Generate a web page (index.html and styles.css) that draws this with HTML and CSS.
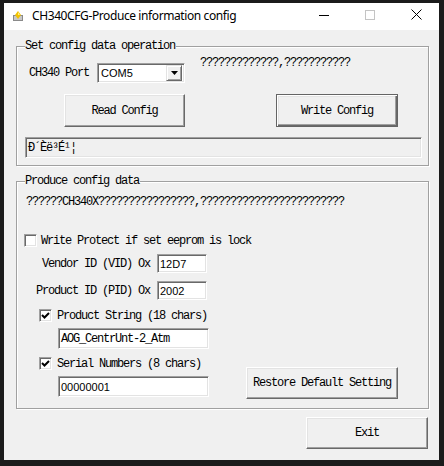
FILE: index.html
```html
<!DOCTYPE html>
<html>
<head>
<meta charset="utf-8">
<link rel="stylesheet" href="styles.css">
</head>
<body>
<div class="window">
  <div class="titlebar">
    <svg class="app-icon" width="12" height="12" viewBox="0 0 12 12">
      <rect x="1" y="5" width="10" height="6" fill="#8a8a8a"/>
      <rect x="2" y="6" width="8" height="4" fill="#c8c8c8"/>
      <polygon points="6,1 9,5 6,9 3,5" fill="#f2c200"/>
      <polygon points="6,2 8,5 6,5" fill="#fff27a"/>
    </svg>
    <span class="title">CH340CFG-Produce information config</span>
    <div class="caption">
      <span class="cap"><svg width="10" height="10" viewBox="0 0 10 10"><line x1="0" y1="5.5" x2="10" y2="5.5" stroke="#000" stroke-width="1"/></svg></span>
      <span class="cap"><svg width="10" height="10" viewBox="0 0 10 10"><rect x="0.5" y="0.5" width="9" height="9" fill="none" stroke="#c4c4c4" stroke-width="1"/></svg></span>
      <span class="cap"><svg width="11" height="11" viewBox="0 0 11 11"><path d="M0.5 0.5 L10.5 10.5 M10.5 0.5 L0.5 10.5" stroke="#000" stroke-width="1"/></svg></span>
    </div>
  </div>
  <div class="client">
    <section class="group g1">
      <div class="legend">Set config data operation</div>
      <div class="port-row">
        <span class="label port-label">CH340 Port</span>
        <div class="combo">
          <span class="combo-value">COM5</span>
          <span class="combo-btn"><svg width="7" height="4" viewBox="0 0 7 4"><polygon points="0,0 7,0 3.5,4" fill="#000"/></svg></span>
        </div>
        <span class="label hint">?????????????,???????????</span>
      </div>
      <div class="btn-row">
        <button class="btn read-btn">Read Config</button>
        <button class="btn btn-default write-btn">Write Config</button>
      </div>
      <div class="field status">Ð´Èë³É¹¦</div>
    </section>

    <section class="group g2">
      <div class="legend">Produce config data</div>
      <div class="label note">??????CH340X????????????????,????????????????????????</div>
      <label class="check-row protect">
        <span class="checkbox"></span>
        <span class="label">Write Protect if set eeprom is lock</span>
      </label>
      <div class="id-row vid">
        <span class="label id-label">Vendor ID (VID) Ox</span>
        <span class="field sans small-field">12D7</span>
      </div>
      <div class="id-row pid">
        <span class="label id-label">Product ID (PID) Ox</span>
        <span class="field sans small-field">2002</span>
      </div>
      <div class="lower">
        <div class="lower-left">
          <label class="check-row">
            <span class="checkbox checked"><svg width="9" height="9" viewBox="0 0 9 9"><path d="M1 4 L3.5 6.5 L8 2" fill="none" stroke="#000" stroke-width="2"/></svg></span>
            <span class="label">Product String (18 chars)</span>
          </label>
          <span class="field wide-field mono">AOG_CentrUnt-2_Atm</span>
          <label class="check-row serial-row">
            <span class="checkbox checked"><svg width="9" height="9" viewBox="0 0 9 9"><path d="M1 4 L3.5 6.5 L8 2" fill="none" stroke="#000" stroke-width="2"/></svg></span>
            <span class="label">Serial Numbers (8 chars)</span>
          </label>
          <span class="field wide-field sans">00000001</span>
        </div>
        <button class="btn restore-btn">Restore Default Setting</button>
      </div>
    </section>

    <button class="btn exit-btn">Exit</button>
  </div>
</div>
</body>
</html>
```

FILE: styles.css
```css
* { box-sizing: border-box; }
html, body { margin: 0; padding: 0; }
body {
  background: #1b1b1b;
  width: 444px;
  height: 466px;
  overflow: hidden;
  padding: 3px 0 0 4px;
}
.window {
  width: 435px;
  height: 457px;
  background: #f0f0f0;
  display: flex;
  flex-direction: column;
}
.titlebar {
  height: 27px;
  background: #ffffff;
  display: flex;
  align-items: center;
  flex: none;
}
.app-icon { margin-left: 8px; margin-top: -2px; flex: none; }
.title {
  margin-left: 8px;
  font-family: "Noto Sans", sans-serif;
  font-size: 12px;
  letter-spacing: -0.4px;
  color: #000;
  margin-top: -3px;
  white-space: nowrap;
}
.caption { margin-left: auto; display: flex; height: 27px; }
.cap {
  width: 46px;
  height: 27px;
  display: flex;
  align-items: center;
  justify-content: center;
  padding-bottom: 4px;
}
.cap svg { display: block; }

.client {
  flex: 1;
  display: flex;
  flex-direction: column;
  padding: 16px 10px 0 12px;
  font-family: "Liberation Mono", monospace;
  font-size: 12px;
  letter-spacing: -1.2px;
  color: #000;
}
.label { line-height: 12px; white-space: nowrap; }
.group {
  width: 413px;
  border: 1px solid #a0a0a0;
  box-shadow: inset 1px 1px #fff, 1px 1px #fff;
  display: flex;
  flex-direction: column;
}
.legend {
  margin: -8px 0 0 8px;
  padding: 0 1px 0 0;
  line-height: 14px;
  height: 14px;
  background: #f0f0f0;
  align-self: flex-start;
  white-space: nowrap;
}
.g1 { padding-bottom: 7px; }
.port-row {
  display: flex;
  align-items: center;
  margin-top: 10px;
  height: 20px;
}
.port-label { margin-left: 12px; }
.combo {
  margin-left: 8px;
  width: 88px;
  height: 20px;
  background: #fff;
  border: 1px solid;
  border-color: #a0a0a0 #fff #fff #a0a0a0;
  box-shadow: inset 1px 1px #696969, inset -1px -1px #e3e3e3;
  display: flex;
  align-items: center;
  padding: 2px;
}
.combo-value {
  font-family: "Liberation Sans", sans-serif;
  font-size: 11px;
  letter-spacing: 0;
  line-height: 14px;
  padding-left: 1px;
  flex: 1;
}
.combo-btn {
  width: 16px;
  height: 16px;
  background: #f0f0f0;
  border: 1px solid;
  border-color: #e3e3e3 #696969 #696969 #e3e3e3;
  box-shadow: inset 1px 1px #fff, inset -1px -1px #a0a0a0;
  display: flex;
  align-items: center;
  justify-content: center;
}
.combo-btn svg { display: block; }
.hint { margin-left: 15px; align-self: flex-start; margin-top: -6px; }

.btn-row { display: flex; margin-top: 11px; }
.btn {
  font-family: "Liberation Mono", monospace;
  font-size: 12px;
  letter-spacing: -1.2px;
  color: #000;
  background: #f0f0f0;
  border: 1px solid;
  border-color: #fff #696969 #696969 #fff;
  box-shadow: inset -1px -1px #a0a0a0, inset 1px 1px #e3e3e3;
  padding: 0;
  line-height: 12px;
  display: flex;
  align-items: center;
  justify-content: center;
}
.btn-default {
  border-color: #646464;
  box-shadow: inset 1px 1px #fff, inset -1px -1px #696969, inset -2px -2px #a0a0a0, inset 2px 2px #e3e3e3;
}
.read-btn { width: 121px; height: 33px; margin-left: 47px; }
.write-btn { width: 122px; height: 33px; margin-left: auto; margin-right: 30px; }

.field {
  border: 1px solid;
  border-color: #a0a0a0 #fff #fff #a0a0a0;
  box-shadow: inset 1px 1px #696969, inset -1px -1px #e3e3e3;
  background: #fff;
  display: flex;
  align-items: center;
  padding: 0 2px;
  white-space: nowrap;
}
.status {
  margin: 10px 6px 0 8px;
  height: 21px;
  background: #f0f0f0;
  line-height: 12px;
}
.sans {
  font-family: "Liberation Sans", sans-serif;
  font-size: 11px;
  letter-spacing: 0;
}
.mono { line-height: 12px; }

.g2 { margin-top: 15px; padding-bottom: 11px; }
.note { margin: 8px 0 0 9px; }
.check-row { display: flex; align-items: center; height: 13px; }
.checkbox {
  width: 13px;
  height: 13px;
  flex: none;
  background: #fff;
  border: 1px solid;
  border-color: #a0a0a0 #fff #fff #a0a0a0;
  box-shadow: inset 1px 1px #696969, inset -1px -1px #e3e3e3;
  display: flex;
  align-items: center;
  justify-content: center;
}
.checkbox svg { display: block; }
.check-row .label { margin-left: 4px; }
.protect { margin: 26px 0 0 7px; }
.id-row { display: flex; align-items: center; }
.id-label { width: 133px; text-align: right; flex: none; }
.small-field { width: 50px; height: 19px; margin-left: 7px; }
.vid { margin-top: 7px; }
.pid { margin-top: 8px; }
.lower { display: flex; align-items: flex-end; margin-top: 9px; }
.lower-left { display: flex; flex-direction: column; align-items: flex-start; }
.lower-left .check-row { margin-left: 22px; }
.lower-left .check-row .label { margin-left: 5px; }
.wide-field { width: 151px; height: 21px; margin: 6px 0 0 41px; }
.serial-row { margin-top: 8px; }
.restore-btn { width: 152px; height: 32px; margin: 0 30px -2px auto; }

.exit-btn { width: 122px; height: 32px; margin: 8px 1px 0 auto; }
```
